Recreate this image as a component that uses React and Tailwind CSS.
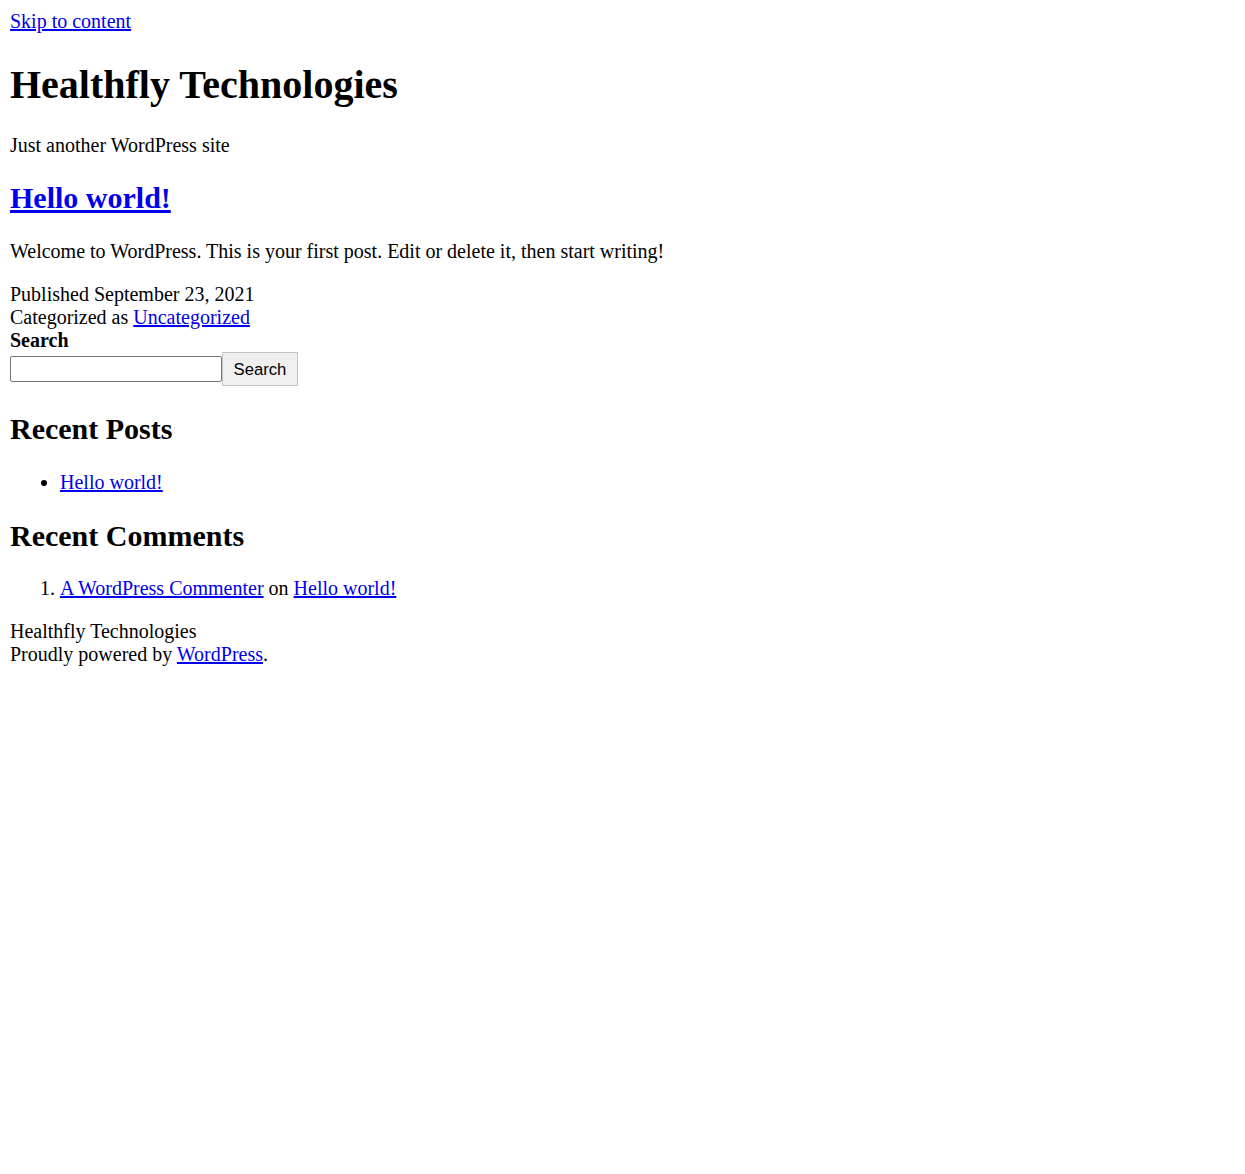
import React from 'react';

const Link = ({ children }) => (
  <a href="#" className="text-[#0000ee] underline">
    {children}
  </a>
);

const App = () => {
  return (
    <div className="min-h-[1174px] bg-white p-[10px] text-[20px] leading-[23px] text-black font-['Liberation_Serif','Times_New_Roman',serif]">
      <div>
        <Link>Skip to content</Link>
      </div>

      {/* Site header */}
      <h1 className="mt-[28.8px] text-[40px] leading-[46px] font-bold">Healthfly Technologies</h1>
      <p className="mt-[25.8px]">Just another WordPress site</p>

      {/* Post */}
      <h2 className="mt-[24.9px] text-[30px] leading-[34.5px] font-bold">
        <Link>Hello world!</Link>
      </h2>
      <p className="mt-[23.9px]">
        Welcome to WordPress. This is your first post. Edit or delete it, then start writing!
      </p>
      <div className="mt-[20px]">
        <div>Published September 23, 2021</div>
        <div>
          Categorized as <Link>Uncategorized</Link>
        </div>
      </div>

      {/* Search widget */}
      <label className="block font-bold">Search</label>
      <div className="flex items-center h-[34px]">
        <input
          type="text"
          className="w-[212px] h-[26px] border border-[#767676] rounded-[2px] bg-white px-[2px] outline-none"
        />
        <button className="h-[34px] w-[76px] pt-[2px] bg-[#efefef] border border-[#c4c4c4] text-[16.67px] font-['Liberation_Sans',Arial,sans-serif]">
          Search
        </button>
      </div>

      <h2 className="mt-[25.9px] text-[30px] leading-[34.5px] font-bold">Recent Posts</h2>
      <ul className="mt-[24.9px] pl-[50px] list-disc">
        <li>
          <Link>Hello world!</Link>
        </li>
      </ul>

      <h2 className="mt-[24.9px] text-[30px] leading-[34.5px] font-bold">Recent Comments</h2>
      <ol className="mt-[23.9px] pl-[50px] list-decimal">
        <li>
          <Link>A WordPress Commenter</Link> on <Link>Hello world!</Link>
        </li>
      </ol>

      {/* Footer */}
      <div className="mt-[20px]">
        <div>Healthfly Technologies</div>
        <div>
          Proudly powered by <Link>WordPress</Link>.
        </div>
      </div>
    </div>
  );
};

export default App;
